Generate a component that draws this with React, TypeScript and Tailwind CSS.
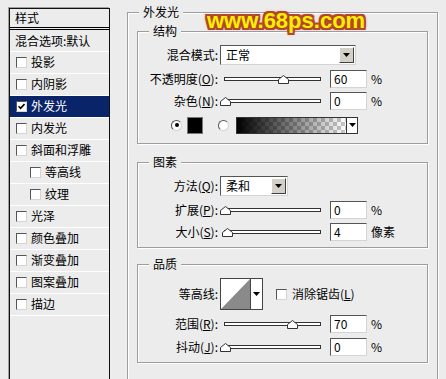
import React from "react";

type Item = { t: string; checked?: boolean; selected?: boolean; indent?: boolean };

const items: Item[] = [
  { t: "投影" },
  { t: "内阴影" },
  { t: "外发光", checked: true, selected: true },
  { t: "内发光" },
  { t: "斜面和浮雕" },
  { t: "等高线", indent: true },
  { t: "纹理", indent: true },
  { t: "光泽" },
  { t: "颜色叠加" },
  { t: "渐变叠加" },
  { t: "图案叠加" },
  { t: "描边" },
];

function Checkbox({ checked = false, className = "" }: { checked?: boolean; className?: string }) {
  return (
    <span className={`flex w-[11px] h-[11px] shrink-0 items-center justify-center bg-white border border-t-[#555] border-l-[#555] border-b-[#d4d4d4] border-r-[#d4d4d4] ${className}`}>
      {checked && (
        <svg width="7" height="7" viewBox="0 0 7 7">
          <path d="M0.5 3.2 L2.6 5.3 L6.5 1" stroke="#000" strokeWidth="1.6" fill="none" />
        </svg>
      )}
    </span>
  );
}

function Radio({ checked = false, className = "" }: { checked?: boolean; className?: string }) {
  return (
    <span className={`flex w-[11px] h-[11px] shrink-0 items-center justify-center rounded-full bg-white border border-t-[#555] border-l-[#555] border-b-[#d4d4d4] border-r-[#d4d4d4] ${className}`}>
      {checked && <span className="w-[4px] h-[4px] rounded-full bg-black" />}
    </span>
  );
}

function Arrow() {
  return (
    <svg width="7" height="4" viewBox="0 0 7 4">
      <path d="M0 0 H7 L3.5 4 Z" fill="#000" />
    </svg>
  );
}

function Label({ children }: { children: React.ReactNode }) {
  return <span className="w-[82px] shrink-0 text-right pr-[2px]">{children}</span>;
}

function Select({ text, width }: { text: string; width: string }) {
  return (
    <div className={`flex items-center h-[20px] ${width} bg-white border border-t-[#555] border-l-[#555] border-b-[#d4d4d4] border-r-[#d4d4d4]`}>
      <span className="flex-1 pl-[5px]">{text}</span>
      <span className="flex items-center justify-center w-[15px] h-[16px] mr-[1px] bg-[#d4d0c8] border border-t-white border-l-white border-b-[#404040] border-r-[#404040]">
        <Arrow />
      </span>
    </div>
  );
}

function Slider({ v }: { v: number }) {
  return (
    <div className="relative flex items-center w-[102px] h-[12px] pl-[4px] pr-[1px]">
      <div className="flex-1 h-[4px] bg-white border border-[#333]" />
      <svg className="absolute top-[2px]" style={{ left: Math.round(v * 96) }} width="11" height="9" viewBox="0 0 11 9">
        <path d="M0.5 8.5 V4.5 L5.5 0.5 L10.5 4.5 V8.5 Z" fill="#fff" stroke="#333" />
      </svg>
    </div>
  );
}

function NumBox({ value }: { value: string }) {
  return (
    <div className="ml-[8px] w-[37px] h-[18px] pl-[3px] leading-[16px] bg-white border border-t-[#555] border-l-[#555] border-b-[#d4d4d4] border-r-[#d4d4d4]">
      {value}
    </div>
  );
}

function SliderRow({ label, v, value, unit, className = "" }: { label: React.ReactNode; v: number; value: string; unit: string; className?: string }) {
  return (
    <div className={`flex items-center h-[22px] ${className}`}>
      <Label>{label}</Label>
      <Slider v={v} />
      <NumBox value={value} />
      <span className="ml-[4px]">{unit}</span>
    </div>
  );
}

function Group({ title, className = "", legend = "ml-[11px]", children }: { title: string; className?: string; legend?: string; children: React.ReactNode }) {
  return (
    <fieldset className={`border border-[#9d9d9d] shadow-[1px_1px_0_#fff,inset_1px_1px_0_#fff] ${className}`}>
      <legend className={`${legend} px-[4px] leading-[14px] bg-[#ececec]`}>{title}</legend>
      {children}
    </fieldset>
  );
}

export default function App() {
  return (
    <div className="relative flex items-start w-[446px] h-[379px] overflow-hidden bg-[#ececec] pl-[9px] pt-[8px] text-[12px] leading-[14px] text-black font-['Noto_Sans_CJK_SC',sans-serif]">
      {/* left list */}
      <div className="flex flex-col w-[101px] h-[400px] shrink-0 border border-[#111] shadow-[-1px_-1px_0_#a0a0a0]">
        <div className="flex items-center h-[21px] pl-[5px] border-b-[3px] border-double border-black">样式</div>
        <div className="flex items-center h-[22px] pl-[5px] border-b border-white">混合选项:默认</div>
        {items.map((it) => (
          <div
            key={it.t}
            className={`flex items-center h-[22px] border-b border-white ${it.indent ? "pl-[20px]" : "pl-[6px]"} ${it.selected ? "bg-[#0a246a] text-white" : ""}`}
          >
            <Checkbox checked={it.checked} />
            <span className="ml-[4px] pb-[1px]">{it.t}</span>
          </div>
        ))}
      </div>

      {/* right panel */}
      <Group title="外发光" legend="ml-[2px]" className="ml-[17px] -mt-[3px] w-[311px] h-[400px] shrink-0 px-[9px] pt-[5px]">
        <Group title="结构" className="pt-[6px] pb-[6px]">
          <div className="flex items-center h-[22px]">
            <Label>混合模式:</Label>
            <Select text="正常" width="w-[136px]" />
          </div>
          <SliderRow className="mt-[2px]" label={<>不透明度(<u>O</u>):</>} v={0.6} value="60" unit="%" />
          <SliderRow label={<>杂色(<u>N</u>):</>} v={0} value="0" unit="%" />
          <div className="flex items-center h-[24px] mt-[1px]">
            <Radio checked className="ml-[33px]" />
            <span className="ml-[5px] w-[16px] h-[17px] bg-black border border-[#777]" />
            <Radio className="ml-[15px]" />
            <div className="flex ml-[7px] w-[122px] h-[17px] border border-[#333]">
              <div className="flex-1 [background:linear-gradient(to_right,#000,rgba(0,0,0,0)),repeating-conic-gradient(#c8c8c8_0_25%,#fff_0_50%)_0_0/8px_8px]" />
              <div className="flex items-center justify-center w-[11px] bg-white border-l border-[#333]">
                <Arrow />
              </div>
            </div>
          </div>
        </Group>

        <Group title="图素" className="mt-[11px] pt-[6px] pb-[4px]">
          <div className="flex items-center h-[22px]">
            <Label>方法(<u>Q</u>):</Label>
            <Select text="柔和" width="w-[68px]" />
          </div>
          <SliderRow className="mt-[2px]" label={<>扩展(<u>P</u>):</>} v={0} value="0" unit="%" />
          <SliderRow label={<>大小(<u>S</u>):</>} v={4 / 250} value="4" unit="像素" />
        </Group>

        <Group title="品质" className="mt-[9px] pt-[7px] pb-[4px]">
          <div className="flex items-center h-[32px]">
            <Label>等高线:</Label>
            <div className="flex w-[43px] h-[32px] bg-white border border-[#444]">
              <svg width="29" height="30" viewBox="0 0 29 30">
                <path d="M0 30 L29 0 V30 Z" fill="#8a8a8a" />
              </svg>
              <div className="flex items-center justify-center flex-1 border-l border-[#444]">
                <Arrow />
              </div>
            </div>
            <Checkbox className="ml-[13px]" />
            <span className="ml-[5px]">消除锯齿(<u>L</u>)</span>
          </div>
          <SliderRow className="mt-[3px]" label={<>范围(<u>R</u>):</>} v={0.7} value="70" unit="%" />
          <SliderRow className="mt-[1px]" label={<>抖动(<u>J</u>):</>} v={0} value="0" unit="%" />
        </Group>
      </Group>

      {/* watermark */}
      <div className="absolute left-[207px] top-[10px] text-[22px] leading-[22px] font-bold text-[#fff000] font-['Liberation_Sans',Arial,sans-serif] [text-shadow:2px_0_#b3472b,-2px_0_#b3472b,0_2px_#b3472b,0_-2px_#b3472b,2px_2px_#b3472b,-2px_-2px_#b3472b,2px_-2px_#b3472b,-2px_2px_#b3472b,0_0_4px_#b3472b]">
        www.68ps.com
      </div>
    </div>
  );
}
